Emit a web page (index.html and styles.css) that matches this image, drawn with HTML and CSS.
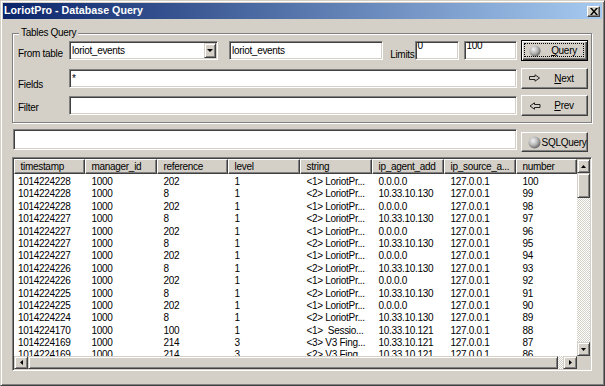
FILE: index.html
```html
<!DOCTYPE html>
<html>
<head>
<meta charset="utf-8">
<title>LoriotPro - Database Query</title>
<link rel="stylesheet" href="styles.css">
</head>
<body>
<div class="window">
  <div class="titlebar">
    <span class="title">LoriotPro - Database Query</span>
    <span class="close"><svg width="8" height="7" viewBox="0 0 8 7"><path d="M0 0h2l2 2.4 2-2.4h2l-3 3.5 3 3.5h-2l-2-2.4-2 2.4h-2l3-3.5z" fill="#000"/></svg></span>
  </div>
  <div class="content">
    <div class="group">
      <span class="legend">Tables Query</span>
      <div class="grid">
        <span class="lbl lbl-from">From table</span>
        <div class="row1">
          <div class="edit combo"><span class="val">loriot_events</span><span class="drop"><svg width="6" height="3" viewBox="0 0 6 3"><path d="M0 0h6l-3 3z" fill="#000"/></svg></span></div>
          <div class="edit w-table"><span class="val">loriot_events</span></div>
          <span class="lbl-limits">Limits</span>
          <div class="edit top w-lim1"><span class="val">0</span></div>
          <div class="edit top w-lim2"><span class="val">100</span></div>
        </div>
        <button class="btn default"><svg class="ico" width="12" height="12" viewBox="0 0 12 12"><defs><radialGradient id="sp1" cx="0.38" cy="0.35" r="0.65"><stop offset="0" stop-color="#f4f4f4"/><stop offset="0.55" stop-color="#b8b8b8"/><stop offset="1" stop-color="#6c6c6c"/></radialGradient></defs><circle cx="6" cy="6" r="5.6" fill="url(#sp1)"/></svg><span class="txt"><u>Q</u>uery</span></button>

        <span class="lbl lbl-fields">Fields</span>
        <div class="edit"><span class="val">*</span></div>
        <button class="btn"><svg class="ico" width="12" height="8" viewBox="0 0 12 8"><path d="M0.5 2.5H6V0.8L10.5 4L6 7.2V5.5H0.5Z" fill="none" stroke="#222" stroke-width="1"/></svg><span class="txt"><u>N</u>ext</span></button>

        <span class="lbl lbl-filter">Filter</span>
        <div class="edit"></div>
        <button class="btn"><svg class="ico" width="12" height="8" viewBox="0 0 12 8"><path d="M11 2.5H5.5V0.8L1 4L5.5 7.2V5.5H11Z" fill="none" stroke="#222" stroke-width="1"/></svg><span class="txt"><u>P</u>rev</span></button>
      </div>
    </div>

    <div class="sqlrow">
      <div class="edit sql"></div>
      <button class="btn sqlbtn"><svg class="ico" width="13" height="13" viewBox="0 0 13 13"><defs><radialGradient id="sp2" cx="0.38" cy="0.35" r="0.65"><stop offset="0" stop-color="#f4f4f4"/><stop offset="0.55" stop-color="#b8b8b8"/><stop offset="1" stop-color="#6c6c6c"/></radialGradient></defs><circle cx="6.5" cy="6.5" r="6" fill="url(#sp2)"/></svg><span class="txt">SQLQuery</span></button>
    </div>

    <div class="list">
      <div class="listmain">
        <div class="th">
          <span>timestamp</span><span>manager_id</span><span>reference</span><span>level</span><span>string</span><span>ip_agent_add</span><span>ip_source_a...</span><span>number</span>
        </div>
        <div class="rows">
          <div class="tr"><span>1014224228</span><span>1000</span><span>202</span><span>1</span><span>&lt;1&gt; LoriotPr...</span><span>0.0.0.0</span><span>127.0.0.1</span><span>100</span></div>
          <div class="tr"><span>1014224228</span><span>1000</span><span>8</span><span>1</span><span>&lt;2&gt; LoriotPr...</span><span>10.33.10.130</span><span>127.0.0.1</span><span>99</span></div>
          <div class="tr"><span>1014224228</span><span>1000</span><span>202</span><span>1</span><span>&lt;1&gt; LoriotPr...</span><span>0.0.0.0</span><span>127.0.0.1</span><span>98</span></div>
          <div class="tr"><span>1014224227</span><span>1000</span><span>8</span><span>1</span><span>&lt;2&gt; LoriotPr...</span><span>10.33.10.130</span><span>127.0.0.1</span><span>97</span></div>
          <div class="tr"><span>1014224227</span><span>1000</span><span>202</span><span>1</span><span>&lt;1&gt; LoriotPr...</span><span>0.0.0.0</span><span>127.0.0.1</span><span>96</span></div>
          <div class="tr"><span>1014224227</span><span>1000</span><span>8</span><span>1</span><span>&lt;2&gt; LoriotPr...</span><span>10.33.10.130</span><span>127.0.0.1</span><span>95</span></div>
          <div class="tr"><span>1014224227</span><span>1000</span><span>202</span><span>1</span><span>&lt;1&gt; LoriotPr...</span><span>0.0.0.0</span><span>127.0.0.1</span><span>94</span></div>
          <div class="tr"><span>1014224226</span><span>1000</span><span>8</span><span>1</span><span>&lt;2&gt; LoriotPr...</span><span>10.33.10.130</span><span>127.0.0.1</span><span>93</span></div>
          <div class="tr"><span>1014224226</span><span>1000</span><span>202</span><span>1</span><span>&lt;1&gt; LoriotPr...</span><span>0.0.0.0</span><span>127.0.0.1</span><span>92</span></div>
          <div class="tr"><span>1014224225</span><span>1000</span><span>8</span><span>1</span><span>&lt;2&gt; LoriotPr...</span><span>10.33.10.130</span><span>127.0.0.1</span><span>91</span></div>
          <div class="tr"><span>1014224225</span><span>1000</span><span>202</span><span>1</span><span>&lt;1&gt; LoriotPr...</span><span>0.0.0.0</span><span>127.0.0.1</span><span>90</span></div>
          <div class="tr"><span>1014224224</span><span>1000</span><span>8</span><span>1</span><span>&lt;2&gt; LoriotPr...</span><span>10.33.10.130</span><span>127.0.0.1</span><span>89</span></div>
          <div class="tr"><span>1014224170</span><span>1000</span><span>100</span><span>1</span><span>&lt;1&gt;  Sessio...</span><span>10.33.10.121</span><span>127.0.0.1</span><span>88</span></div>
          <div class="tr"><span>1014224169</span><span>1000</span><span>214</span><span>3</span><span>&lt;3&gt; V3 Fing...</span><span>10.33.10.121</span><span>127.0.0.1</span><span>87</span></div>
          <div class="tr"><span>1014224169</span><span>1000</span><span>214</span><span>3</span><span>&lt;2&gt; V3 Fing...</span><span>10.33.10.121</span><span>127.0.0.1</span><span>86</span></div>
        </div>
      </div>
      <div class="vscroll">
        <span class="sbtn"><svg width="5" height="3" viewBox="0 0 5 3"><path d="M0 3h5l-2.5-3z" fill="#000"/></svg></span>
        <span class="thumb vthumb"></span>
        <span class="track"></span>
        <span class="sbtn"><svg width="5" height="3" viewBox="0 0 5 3"><path d="M0 0h5l-2.5 3z" fill="#000"/></svg></span>
      </div>
      <div class="hscroll">
        <span class="sbtn"><svg width="3" height="5" viewBox="0 0 3 5"><path d="M3 0v5l-3-2.5z" fill="#000"/></svg></span>
        <span class="thumb hthumb"></span>
        <span class="track htrack"></span>
        <span class="sbtn"><svg width="3" height="5" viewBox="0 0 3 5"><path d="M0 0v5l3-2.5z" fill="#000"/></svg></span>
      </div>
      <div class="corner"></div>
    </div>
  </div>
</div>
</body>
</html>
```
FILE: styles.css
```css
* { box-sizing: border-box; }

body {
  margin: 0;
  background: #D4D0C8;
  font-family: "Liberation Sans", Arial, sans-serif;
  font-size: 10px;
  letter-spacing: -0.3px;
  color: #000;
}

.window {
  width: 605px;
  height: 386px;
  border: 1px solid;
  border-color: #D4D0C8 #404040 #404040 #D4D0C8;
  box-shadow: inset 1px 1px #fff, inset -1px -1px #808080;
  padding: 2px;
  background: #D4D0C8;
  display: flex;
  flex-direction: column;
}

.titlebar {
  height: 16px;
  flex: none;
  background: linear-gradient(to right, #0A246A, #A6CAF0);
  display: flex;
  align-items: center;
  padding: 0 2px 0 1px;
}

.title {
  flex: 1;
  color: #fff;
  font-weight: bold;
  font-size: 10.7px;
  letter-spacing: 0;
  line-height: 13px;
  padding-bottom: 1px;
}

.close {
  width: 13px;
  height: 11px;
  background: #D4D0C8;
  border: 1px solid;
  border-color: #fff #404040 #404040 #fff;
  box-shadow: inset -1px -1px #808080;
  display: flex;
  align-items: center;
  justify-content: center;
}

.content {
  flex: 1;
  padding: 0 10px 0 9px;
  display: flex;
  flex-direction: column;
}

.group {
  margin-top: 14px;
  position: relative;
  border: 1px solid #808080;
  box-shadow: inset 1px 1px #fff, 1px 1px #fff;
  padding: 6px 3px 6px 5px;
}

.legend {
  position: absolute;
  left: 6px;
  top: -8px;
  padding: 0 2px;
  background: #D4D0C8;
  line-height: 13px;
}

.grid {
  display: grid;
  grid-template-columns: 51px 448px 71px;
  grid-auto-rows: 21px;
  row-gap: 6.5px;
  align-items: center;
}

.lbl {
  align-self: start;
  line-height: 13px;
  white-space: nowrap;
}
.lbl-from { padding-top: 6.5px; }
.lbl-fields { padding-top: 10px; }
.lbl-filter { padding-top: 5.5px; }

.row1 {
  display: flex;
  align-items: center;
  height: 21px;
}

.edit {
  height: 19px;
  background: #fff;
  border: 1px solid;
  border-color: #808080 #fff #fff #808080;
  box-shadow: inset 1px 1px #404040, inset -1px -1px #D4D0C8;
  padding: 1px 2px;
  display: flex;
  align-items: center;
  line-height: 13px;
  white-space: nowrap;
  overflow: hidden;
}

.combo {
  width: 149px;
  padding-right: 1px;
  margin-right: 11px;
}
.combo .val { flex: 1; }
.drop {
  width: 12px;
  height: 15px;
  background: #D4D0C8;
  border: 1px solid;
  border-color: #D4D0C8 #404040 #404040 #D4D0C8;
  box-shadow: inset 1px 1px #fff, inset -1px -1px #808080;
  display: flex;
  align-items: center;
  justify-content: center;
}

.w-table { width: 154px; }

.lbl-limits {
  width: 32px;
  align-self: flex-end;
  text-align: right;
  line-height: 13px;
  padding-right: 0.5px;
}

.edit.top { align-items: flex-start; line-height: 10px; padding-left: 1.5px; }
.edit.top .val { margin-top: -2px; }
.w-lim1 { width: 44px; margin-right: 5px; }
.w-lim2 { width: 53px; }

.btn {
  justify-self: end;
  width: 67px;
  height: 21px;
  margin: 0;
  padding: 0 0 0 7px;
  font: inherit;
  letter-spacing: inherit;
  color: #000;
  background: #D4D0C8;
  border: 1px solid;
  border-color: #fff #404040 #404040 #fff;
  box-shadow: inset -1px -1px #808080;
  display: flex;
  align-items: center;
  position: relative;
  line-height: 13px;
}
.btn .ico { flex: none; }
.btn .txt { flex: 1; text-align: center; white-space: nowrap; }
.btn u { text-decoration-thickness: 1px; text-underline-offset: 1px; }

.btn.default {
  border-color: #000;
  box-shadow: inset 1px 1px #fff, inset -1px -1px #404040, inset -2px -2px #808080;
}
.btn.default::after {
  content: "";
  position: absolute;
  left: 2px;
  top: 2px;
  right: 3px;
  bottom: 3px;
  border: 1px dotted #000;
}

.sqlrow {
  margin-top: 6px;
  display: flex;
  align-items: flex-start;
  padding-left: 1px;
}
.edit.sql { width: 504px; height: 21px; margin-right: 4px; }
.sqlbtn { margin-top: 3px; height: 20px; padding-left: 6px; }

.list {
  margin-top: 5px;
  height: 214px;
  border: 1px solid;
  border-color: #808080 #fff #fff #808080;
  box-shadow: inset 1px 1px #404040, inset -1px -1px #D4D0C8;
  padding: 1px;
  display: grid;
  grid-template-columns: 563px 13px;
  grid-template-rows: 197px 13px;
}

.listmain {
  background: #fff;
  overflow: hidden;
}

.th, .tr {
  display: grid;
  grid-template-columns: 71px 72px 71px 72px 72px 72px 72px 61px;
}

.th { height: 15px; }
.th span {
  background: #D4D0C8;
  border: 1px solid;
  border-color: #fff #404040 #404040 #fff;
  box-shadow: inset -1px -1px #808080;
  padding-left: 5.5px;
  line-height: 13px;
  white-space: nowrap;
  overflow: hidden;
}

.rows { padding-top: 2px; }
.tr { height: 12.4px; line-height: 12.4px; }
.tr span {
  padding-left: 6.5px;
  white-space: pre;
  overflow: hidden;
}
.tr span:first-child { padding-left: 4px; }

.vscroll {
  display: flex;
  flex-direction: column;
}
.hscroll {
  display: flex;
}

.sbtn {
  flex: none;
  width: 13px;
  height: 14px;
  background: #D4D0C8;
  border: 1px solid;
  border-color: #D4D0C8 #404040 #404040 #D4D0C8;
  box-shadow: inset 1px 1px #fff, inset -1px -1px #808080;
  display: flex;
  align-items: center;
  justify-content: center;
}
.hscroll .sbtn { width: 14px; height: 13px; }

.thumb {
  background: #D4D0C8;
  border: 1px solid;
  border-color: #D4D0C8 #404040 #404040 #D4D0C8;
  box-shadow: inset 1px 1px #fff, inset -1px -1px #808080;
}
.vthumb { height: 25px; flex: none; }
.hthumb { flex: 1; }

.track {
  flex: 1;
  background: repeating-conic-gradient(#D4D0C8 0 25%, #fff 0 50%) 0 0 / 2px 2px;
}
.htrack { flex: none; width: 5px; }

.corner { background: #D4D0C8; }
```
